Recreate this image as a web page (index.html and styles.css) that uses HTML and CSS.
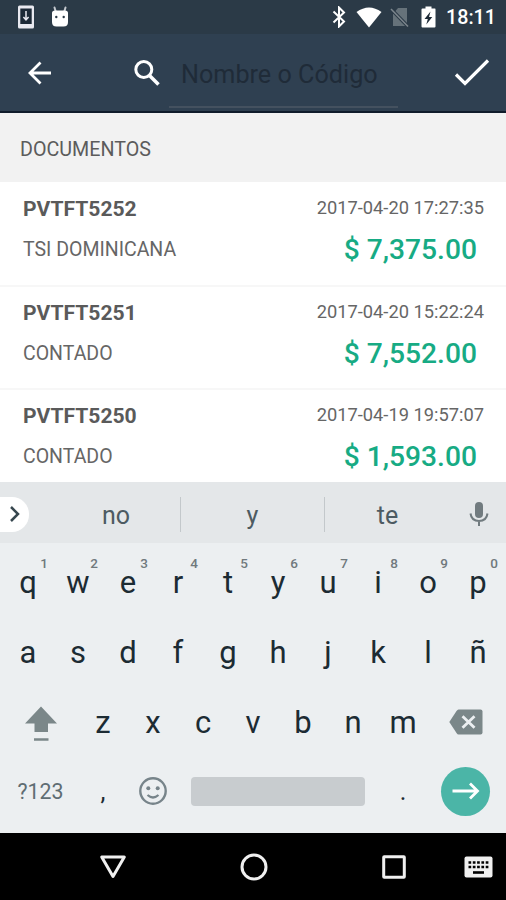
FILE: index.html
```
<!DOCTYPE html>
<html lang="es">
<head>
    <meta charset="UTF-8">
    <meta name="viewport" content="width=device-width, initial-scale=1.0">
    <title>Documentos</title>
    <link rel="stylesheet" href="styles.css">
</head>
<body>
    <div class="screen">
        <div class="status-bar">
            <div class="status-left">
                <svg width="18" height="24" viewBox="0 0 18 24">
                    <rect x="1" y="0.5" width="16" height="23" rx="1.5" fill="#e9e9f0"/>
                    <rect x="3.3" y="3.5" width="11.4" height="15.5" fill="#1c2936"/>
                    <path d="M9 6v8M6.4 12L9 14.8l2.600-2.800" fill="none" stroke="#e9e9f0" stroke-width="1.500"/>
                </svg>
                <svg width="18" height="22" viewBox="0 0 18 22">
                    <path d="M3.500 1.500l1.500 5M14.500 1.500l-1.500 5" stroke="#c5c9cf" stroke-width="2" stroke-linecap="round"/>
                    <path d="M1 7Q1 4.500 4 4.500h10q3 0 3 2.500v9q0 4.500-4.500 4.500h-7Q1 20.500 1 16z" fill="#fff"/>
                    <circle cx="5.300" cy="11" r="1.200" fill="#2b3a47"/>
                    <circle cx="12.700" cy="11" r="1.200" fill="#2b3a47"/>
                </svg>
            </div>
            <div class="status-right">
                <svg width="14" height="22" viewBox="0 0 14 22">
                    <path d="M1.500 5.500L12 15.500 7 20.500V1.500l5 5L1.500 16.500" fill="none" stroke="#fff" stroke-width="2"/>
                </svg>
                <svg class="wifi" width="26" height="21" viewBox="0 0 26 21">
                    <path d="M0.500 5Q13-4 25.500 5L13 20.500z" fill="#fff"/>
                </svg>
                <svg class="sim" width="20" height="21" viewBox="0 0 20 21">
                    <path d="M8 1h9v18H3V7z" fill="#66727a"/>
                    <path d="M1 2l17 17.500" stroke="#2b3a47" stroke-width="3.500"/>
                    <path d="M1 2l17 17.500" stroke="#7d868d" stroke-width="1.500"/>
                </svg>
                <svg class="battery" width="15" height="22" viewBox="0 0 15 22">
                    <path d="M4.500 0.500h6V2.500H14q0.500 0 0.500 1v17q0 1-1 1h-12q-1 0-1-1v-17q0-1 1-1h3z" fill="#fff"/>
                    <path d="M9.500 5.500L3.500 13h3.300l-1.500 5.500 6-7.500H8z" fill="#1c2936"/>
                </svg>
                <span class="clock">18:11</span>
            </div>
        </div>

        <div class="toolbar">
            <svg class="back" width="26" height="26" viewBox="0 0 26 26">
                <path d="M25 13H4M14.500 2.500L4 13l10.500 10.500" fill="none" stroke="#fff" stroke-width="2.800"/>
            </svg>
            <svg class="search" width="28" height="28" viewBox="0 0 28 28">
                <circle cx="10.800" cy="10.500" r="8" fill="none" stroke="#fff" stroke-width="3"/>
                <path d="M16.500 16.500l9 9" stroke="#fff" stroke-width="3.600"/>
            </svg>
            <div class="search-field">Nombre o Código</div>
            <svg class="done" width="36" height="30" viewBox="0 0 36 30">
                <path d="M2 16.500L11 25.500 34 2.500" fill="none" stroke="#fff" stroke-width="3.200"/>
            </svg>
        </div>

        <div class="section-title">DOCUMENTOS</div>

        <div class="documents">
            <div class="document">
                <div class="info">
                    <div class="number">PVTFT5252</div>
                    <div class="client">TSI DOMINICANA</div>
                </div>
                <div class="totals">
                    <div class="date">2017-04-20 17:27:35</div>
                    <div class="amount">$ 7,375.00</div>
                </div>
            </div>
            <div class="document">
                <div class="info">
                    <div class="number">PVTFT5251</div>
                    <div class="client">CONTADO</div>
                </div>
                <div class="totals">
                    <div class="date">2017-04-20 15:22:24</div>
                    <div class="amount">$ 7,552.00</div>
                </div>
            </div>
            <div class="document">
                <div class="info">
                    <div class="number">PVTFT5250</div>
                    <div class="client">CONTADO</div>
                </div>
                <div class="totals">
                    <div class="date">2017-04-19 19:57:07</div>
                    <div class="amount">$ 1,593.00</div>
                </div>
            </div>
        </div>

        <div class="suggestions">
            <div class="expand">
                <svg width="12" height="18" viewBox="0 0 12 18">
                    <path d="M2 2l7 7-7 7" fill="none" stroke="#37474f" stroke-width="2.500"/>
                </svg>
            </div>
            <div class="word first">no</div>
            <div class="word">y</div>
            <div class="word last">te</div>
            <svg class="mic" width="20" height="26" viewBox="0 0 20 26">
                <rect x="6" y="1" width="8" height="16" rx="4" fill="#717b7f"/>
                <path d="M1.500 12.500q1 7.500 8.500 7.500t8.500-7.500M10 20v5" fill="none" stroke="#717b7f" stroke-width="2"/>
            </svg>
        </div>

        <div class="keyboard">
            <div class="keys">
                <div class="key">q<span class="hint">1</span></div>
                <div class="key">w<span class="hint">2</span></div>
                <div class="key">e<span class="hint">3</span></div>
                <div class="key">r<span class="hint">4</span></div>
                <div class="key">t<span class="hint">5</span></div>
                <div class="key">y<span class="hint">6</span></div>
                <div class="key">u<span class="hint">7</span></div>
                <div class="key">i<span class="hint">8</span></div>
                <div class="key">o<span class="hint">9</span></div>
                <div class="key">p<span class="hint">0</span></div>
            </div>
            <div class="keys">
                <div class="key">a</div>
                <div class="key">s</div>
                <div class="key">d</div>
                <div class="key">f</div>
                <div class="key">g</div>
                <div class="key">h</div>
                <div class="key">j</div>
                <div class="key">k</div>
                <div class="key">l</div>
                <div class="key">ñ</div>
            </div>
            <div class="keys">
                <div class="key wide">
                    <svg class="shift" width="32" height="36" viewBox="0 0 32 36">
                        <path d="M16 0.500L32 17.500h-9V26H9.500v-8.500H0z" fill="#7b8789"/>
                        <path d="M9 33.500h14.500" stroke="#7b8789" stroke-width="2.500"/>
                    </svg>
                </div>
                <div class="key">z</div>
                <div class="key">x</div>
                <div class="key">c</div>
                <div class="key">v</div>
                <div class="key">b</div>
                <div class="key">n</div>
                <div class="key">m</div>
                <div class="key wide">
                    <svg class="delete" width="34" height="26" viewBox="0 0 34 26">
                        <path d="M9.500 0.500h22q2 0 2 2v21q0 2-2 2h-22q-1 0-2-1.500L0.300 13 7.500 2q1-1.500 2-1.500z" fill="#7b8789"/>
                        <path d="M13.500 7.200l12 11.600M25.500 7.200l-12 11.600" stroke="#eceff1" stroke-width="2.800"/>
                    </svg>
                </div>
            </div>
            <div class="keys">
                <div class="key wide symbols">?123</div>
                <div class="key mark">,</div>
                <div class="key">
                    <svg class="emoji" width="28" height="28" viewBox="0 0 28 28">
                        <circle cx="14" cy="14" r="12.700" fill="none" stroke="#77848a" stroke-width="2.400"/>
                        <circle cx="9.300" cy="11.200" r="2" fill="#77848a"/>
                        <circle cx="18.700" cy="11.200" r="2" fill="#77848a"/>
                        <path d="M8.500 18q5.500 5 11 0" fill="none" stroke="#77848a" stroke-width="2.200"/>
                    </svg>
                </div>
                <div class="key space"><div class="space-bar"></div></div>
                <div class="key mark">.</div>
                <div class="key wide">
                    <div class="enter">
                        <svg width="28" height="18" viewBox="0 0 28 18">
                            <path d="M0.500 9h25M18 1.500L25.500 9 18 16.500" fill="none" stroke="#fff" stroke-width="2.800"/>
                        </svg>
                    </div>
                </div>
            </div>
        </div>

        <div class="nav-bar">
            <svg class="nav-back" width="28" height="26" viewBox="0 0 28 26">
                <path d="M2.700 3h22.600L14 22.500z" fill="none" stroke="#f0f0f0" stroke-width="3" stroke-linejoin="round"/>
            </svg>
            <svg class="nav-home" width="28" height="28" viewBox="0 0 28 28">
                <circle cx="14" cy="14" r="12" fill="none" stroke="#f0f0f0" stroke-width="3"/>
            </svg>
            <svg class="nav-recent" width="26" height="26" viewBox="0 0 26 26">
                <rect x="2.700" y="2.700" width="20.600" height="20.600" rx="0.500" fill="none" stroke="#f0f0f0" stroke-width="3"/>
            </svg>
            <svg class="nav-ime" width="29" height="22" viewBox="0 0 29 22">
                <rect x="0.500" y="0.500" width="28" height="21" rx="2" fill="#f0f0f0"/>
                <path d="M4.500 6.500h20M4.500 11h20" stroke="#000" stroke-width="2.600" stroke-dasharray="2.700 1.600"/>
                <path d="M9 16.500h11" stroke="#000" stroke-width="2.600"/>
            </svg>
        </div>
    </div>
</body>
</html>
```

FILE: styles.css
```
* {
    box-sizing: border-box;
}

body {
    margin: 0;
    font-family: Roboto, "Liberation Sans", sans-serif;
    background-color: #000000;
}

svg {
    display: block;
    flex: none;
}

.screen {
    width: 506px;
    height: 900px;
    display: flex;
    flex-direction: column;
    overflow: hidden;
}

/* status bar */
.status-bar {
    height: 34px;
    flex: none;
    display: flex;
    justify-content: space-between;
    align-items: center;
    padding: 0 11px 0 17px;
    background-color: #2b3a47;
}

.status-left,
.status-right {
    display: flex;
    align-items: center;
}

.status-left {
    gap: 16px;
}

.wifi {
    margin-left: 10px;
}

.sim {
    margin-left: 8px;
}

.battery {
    margin-left: 11px;
}

.clock {
    margin-left: 10px;
    font-size: 19.700px;
    font-weight: 500;
    line-height: 34px;
    padding-top: 2px;
    color: #ffffff;
}

.status-right {
    margin-right: -1px;
}

/* toolbar */
.toolbar {
    height: 79px;
    flex: none;
    display: flex;
    align-items: center;
    padding: 1px 16px 0 26px;
    background-color: #2f4051;
    border-bottom: 2px solid #101c2b;
}

.search {
    margin-left: 81px;
}

.search-field {
    width: 229px;
    height: 68px;
    margin: 2px 0 0 8px;
    padding-left: 12px;
    font-size: 25.200px;
    line-height: 69px;
    color: #1f2b38;
    border-bottom: 2px solid #44515f;
}

.done {
    margin-left: auto;
}

/* documents */
.section-title {
    height: 69px;
    flex: none;
    padding-left: 20px;
    font-size: 19.700px;
    line-height: 73px;
    color: #5c5c5c;
    background-color: #f2f2f2;
}

.documents {
    height: 300px;
    flex: none;
    padding-top: 1px;
    overflow: hidden;
    background-color: #ffffff;
}

.document {
    height: 103.600px;
    display: flex;
    justify-content: space-between;
    padding: 6px 22px 0 23px;
    border-bottom: 2px solid #f7f7f7;
}

.number {
    font-size: 21.100px;
    font-weight: bold;
    line-height: 40px;
    color: #5a5a5a;
}

.client {
    font-size: 19.500px;
    line-height: 42px;
    color: #666666;
}

.totals {
    text-align: right;
}

.date {
    font-size: 18.300px;
    line-height: 37px;
    color: #666666;
}

.amount {
    padding-right: 7px;
    font-size: 28.200px;
    font-weight: 500;
    line-height: 48px;
    color: #17ab84;
}

/* keyboard */
.suggestions {
    height: 61px;
    flex: none;
    display: flex;
    align-items: center;
    padding-top: 3px;
    background-color: #e4e7e9;
}

.expand {
    width: 29px;
    height: 35px;
    display: flex;
    align-items: center;
    padding-left: 9px;
    border-radius: 0 17px 17px 0;
    background-color: #ffffff;
}

.word {
    width: 144px;
    height: 35px;
    border-right: 1px solid #c3c8cb;
    font-size: 25px;
    line-height: 37px;
    text-align: center;
    color: #4d5b62;
}

.word.first {
    width: 129px;
    margin-left: 23px;
}

.word.last {
    width: 125px;
    border-right: none;
}

.mic {
    margin-left: 19px;
}

.keyboard {
    height: 290px;
    flex: none;
    padding: 5px 3px 0;
    background-color: #eceff1;
}

.keys {
    height: 69.700px;
    display: flex;
}

.key {
    position: relative;
    width: 50px;
    display: flex;
    justify-content: center;
    align-items: center;
    font-size: 31px;
    color: #1c2b33;
}

.wide {
    width: 75px;
}

.hint {
    position: absolute;
    top: 7px;
    left: 33px;
    width: 16px;
    font-size: 13.500px;
    font-weight: 500;
    line-height: 16px;
    text-align: center;
    color: #70797d;
}

.shift {
    margin-top: 4px;
}

.symbols {
    font-size: 21.300px;
    color: #5f6d73;
}

.mark {
    font-size: 25px;
}

.emoji {
    margin-bottom: 2px;
}

.space {
    width: 200px;
}

.space-bar {
    width: 174px;
    height: 29px;
    border-radius: 4px;
    background-color: #c8cccf;
}

.enter {
    width: 49px;
    height: 49px;
    display: flex;
    justify-content: center;
    align-items: center;
    margin-bottom: 1px;
    border-radius: 50%;
    background-color: #4bb5a7;
}

/* navigation bar */
.nav-bar {
    height: 67px;
    flex: none;
    display: flex;
    align-items: center;
    padding-left: 99px;
    background-color: #000000;
}

.nav-home {
    margin-left: 113px;
}

.nav-recent {
    margin-left: 113px;
}

.nav-ime {
    margin-left: 57px;
}
```
